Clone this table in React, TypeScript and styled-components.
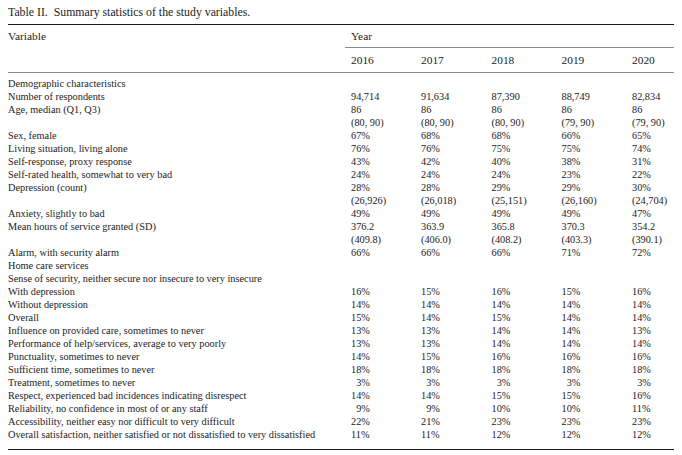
import React from "react";
import styled, { createGlobalStyle } from "styled-components";

const GlobalStyle = createGlobalStyle`
  body {
    margin: 0;
    background: #ffffff;
    font-family: "Liberation Serif", "Times New Roman", serif;
    color: #1c1c1c;
  }
`

const Page = styled.div`
  padding: 0 8px;
`

const Caption = styled.div`
  height: 24px;
  line-height: 24px;
  font-size: 11.8px;
  white-space: pre;
`

const Table = styled.table`
  width: 666px;
  table-layout: fixed;
  border-collapse: collapse;
  border-top: 1.6px solid #1a1a1a;
  border-bottom: 1.6px solid #1a1a1a;
  font-size: 10.3px;
`

const Col = styled.col<{ $w: number }>`
  width: ${(p) => p.$w}px;
`

const HeadCell = styled.th<{ $h?: number; $line?: boolean; $pad?: boolean }>`
  height: ${(p) => p.$h || 22}px;
  padding: 0 0 0 ${(p) => (p.$pad ? 6 : 0)}px;
  text-align: left;
  vertical-align: ${(p) => (p.$pad ? "middle" : "top")};
  font-weight: normal;
  font-size: 11.4px;
  border-bottom: ${(p) => (p.$line ? "1px solid #8c8c8c" : "none")};
`

const VariableHead = styled(HeadCell)`
  padding-top: 5px;
`

const Row = styled.tr<{ $first?: boolean; $last?: boolean }>`
  td {
    padding-top: ${(p) => (p.$first ? 4 : 0)}px;
    padding-bottom: ${(p) => (p.$last ? 8 : 0)}px;
  }
`

const Label = styled.td`
  padding: 0;
  line-height: 13px;
  vertical-align: top;
  white-space: nowrap;
`

const Value = styled.td`
  padding: 0 0 0 6px;
  line-height: 13px;
  vertical-align: top;
  white-space: pre-line;
`

type Item = [string, string[]?];

const rows: Item[] = [
  ["Demographic characteristics"],
  ["Number of respondents", ["94,714", "91,634", "87,390", "88,749", "82,834"]],
  ["Age, median (Q1, Q3)", ["86\n(80, 90)", "86\n(80, 90)", "86\n(80, 90)", "86\n(79, 90)", "86\n(79, 90)"]],
  ["Sex, female", ["67%", "68%", "68%", "66%", "65%"]],
  ["Living situation, living alone", ["76%", "76%", "75%", "75%", "74%"]],
  ["Self-response, proxy response", ["43%", "42%", "40%", "38%", "31%"]],
  ["Self-rated health, somewhat to very bad", ["24%", "24%", "24%", "23%", "22%"]],
  ["Depression (count)", ["28%\n(26,926)", "28%\n(26,018)", "29%\n(25,151)", "29%\n(26,160)", "30%\n(24,704)"]],
  ["Anxiety, slightly to bad", ["49%", "49%", "49%", "49%", "47%"]],
  ["Mean hours of service granted (SD)", ["376.2\n(409.8)", "363.9\n(406.0)", "365.8\n(408.2)", "370.3\n(403.3)", "354.2\n(390.1)"]],
  ["Alarm, with security alarm", ["66%", "66%", "66%", "71%", "72%"]],
  ["Home care services"],
  ["Sense of security, neither secure nor insecure to very insecure"],
  ["With depression", ["16%", "15%", "16%", "15%", "16%"]],
  ["Without depression", ["14%", "14%", "14%", "14%", "14%"]],
  ["Overall", ["15%", "14%", "15%", "14%", "14%"]],
  ["Influence on provided care, sometimes to never", ["13%", "13%", "14%", "14%", "13%"]],
  ["Performance of help/services, average to very poorly", ["13%", "13%", "14%", "14%", "14%"]],
  ["Punctuality, sometimes to never", ["14%", "15%", "16%", "16%", "16%"]],
  ["Sufficient time, sometimes to never", ["18%", "18%", "18%", "18%", "18%"]],
  ["Treatment, sometimes to never", ["\u20073%", "\u20073%", "\u20073%", "\u20073%", "\u20073%"]],
  ["Respect, experienced bad incidences indicating disrespect", ["14%", "14%", "15%", "15%", "16%"]],
  ["Reliability, no confidence in most of or any staff", ["\u20079%", "\u20079%", "10%", "10%", "11%"]],
  ["Accessibility, neither easy nor difficult to very difficult", ["22%", "21%", "23%", "23%", "23%"]],
  ["Overall satisfaction, neither satisfied or not dissatisfied to very dissatisfied", ["11%", "11%", "12%", "12%", "12%"]],
];

const years = ["2016", "2017", "2018", "2019", "2020"];
const widths = [337, 70, 70.5, 70, 70.5, 48];

export default function App() {
  return (
    <Page>
      <GlobalStyle />
      <Caption>{"Table II.  Summary statistics of the study variables."}</Caption>
      <Table>
        <colgroup>
          {widths.map((w, i) => (
            <Col key={i} $w={w} />
          ))}
        </colgroup>
        <thead>
          <tr>
            <VariableHead rowSpan={2} $line>Variable</VariableHead>
            <HeadCell colSpan={5} $pad $line>Year</HeadCell>
          </tr>
          <tr>
            {years.map((y) => (
              <HeadCell key={y} $h={24} $pad $line>{y}</HeadCell>
            ))}
          </tr>
        </thead>
        <tbody>
          {rows.map(([label, vals], i) => (
            <Row key={label} $first={i === 0} $last={i === rows.length - 1}>
              <Label>{label}</Label>
              {(vals || ["", "", "", "", ""]).map((v, j) => (
                <Value key={j}>{v}</Value>
              ))}
            </Row>
          ))}
        </tbody>
      </Table>
    </Page>
  );
}
